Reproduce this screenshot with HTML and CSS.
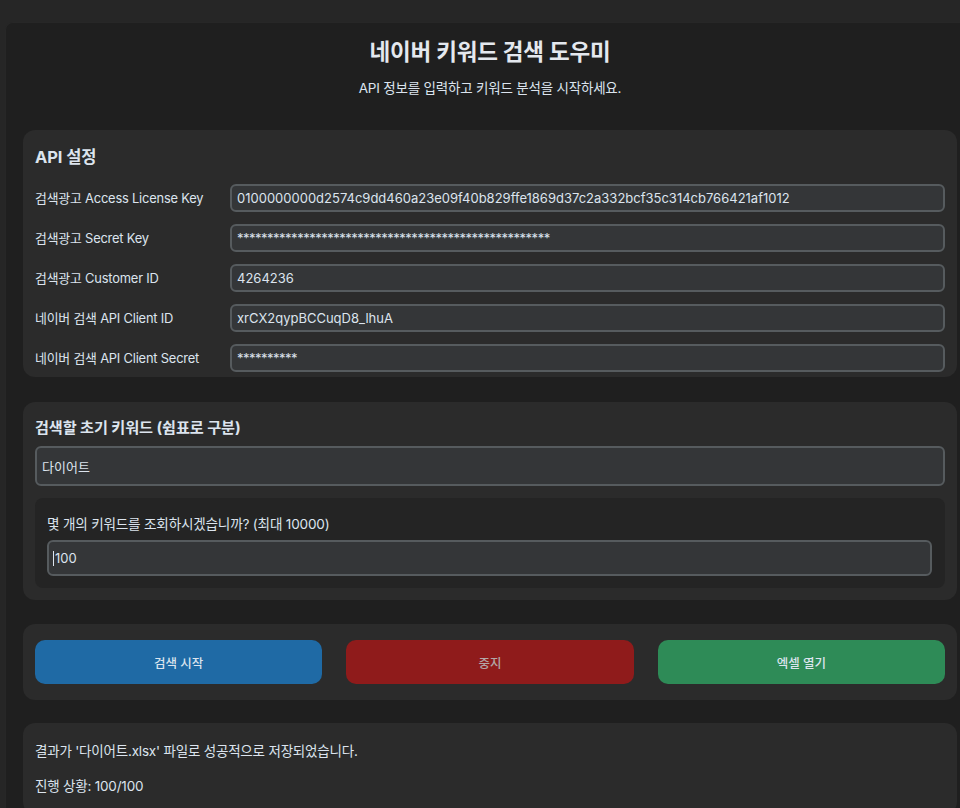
FILE: index.html
```html
<!DOCTYPE html>
<html lang="ko">
<head>
<meta charset="utf-8">
<title>네이버 키워드 검색 도우미</title>
<link rel="stylesheet" href="styles.css">
</head>
<body>
<div class="app">
  <header class="header">
    <h1 class="title">네이버 키워드 검색 도우미</h1>
    <p class="subtitle">API 정보를 입력하고 키워드 분석을 시작하세요.</p>
  </header>

  <section class="card api-card">
    <h2 class="card-title">API 설정</h2>
    <div class="api-grid">
      <span class="label">검색광고 Access License Key</span>
      <div class="field small">0100000000d2574c9dd460a23e09f40b829ffe1869d37c2a332bcf35c314cb766421af1012</div>
      <span class="label">검색광고 Secret Key</span>
      <div class="field small masked">****************************************************</div>
      <span class="label">검색광고 Customer ID</span>
      <div class="field small">4264236</div>
      <span class="label">네이버 검색 API Client ID</span>
      <div class="field small">xrCX2qypBCCuqD8_lhuA</div>
      <span class="label">네이버 검색 API Client Secret</span>
      <div class="field small masked">**********</div>
    </div>
  </section>

  <section class="card keyword-card">
    <h2 class="card-title">검색할 초기 키워드 (쉼표로 구분)</h2>
    <div class="field large">다이어트</div>
    <div class="count-box">
      <div class="count-label">몇 개의 키워드를 조회하시겠습니까? (최대 10000)</div>
      <div class="field medium"><span class="caret"></span>100</div>
    </div>
  </section>

  <section class="card button-card">
    <button class="btn btn-blue" type="button">검색 시작</button>
    <button class="btn btn-red" type="button" disabled>중지</button>
    <button class="btn btn-green" type="button">엑셀 열기</button>
  </section>

  <section class="card status-card">
    <p class="status">결과가 '다이어트.xlsx' 파일로 성공적으로 저장되었습니다.</p>
    <p class="status">진행 상황: 100/100</p>
  </section>
</div>
</body>
</html>
```
FILE: styles.css
```css
* {
  box-sizing: border-box;
}

html, body {
  margin: 0;
  padding: 0;
  overflow: hidden;
}

body {
  background: #262626;
  font-family: Inter, "Noto Sans CJK KR", sans-serif;
  color: #dce4ee;
  font-size: 13px;
}

.app {
  margin: 22px 0 0 5px;
  width: 969px;
  min-height: 820px;
  padding: 0 17px;
  background: #1f1f1f;
  border-top: 1px solid #272727;
  border-left: 1px solid #272727;
  border-top-left-radius: 8px;
}

.header {
  padding-top: 13px;
  text-align: center;
}

.title {
  margin: 0;
  font-size: 22.5px;
  line-height: 32px;
  font-weight: 700;
  letter-spacing: -0.2px;
  color: #e4e8ee;
}

.subtitle {
  margin: 11px 0 0;
  font-size: 13.5px;
  line-height: 18px;
  letter-spacing: -0.2px;
}

.card {
  background: #2b2b2b;
  border-radius: 12px;
}

.card-title {
  margin: 0;
  font-size: 15.2px;
  line-height: 26px;
  font-weight: 700;
  letter-spacing: -0.1px;
}

.api-card {
  margin-top: 33px;
  padding: 14px 12px 5px;
}

.api-card .card-title {
  font-size: 16.5px;
  margin-bottom: 14px;
}

.api-grid {
  display: grid;
  grid-template-columns: 183px 1fr;
  grid-auto-rows: 28px;
  column-gap: 12px;
  row-gap: 12px;
  align-items: center;
}

.label {
  font-size: 12.9px;
  line-height: 18px;
  letter-spacing: -0.2px;
  padding-top: 2px;
}

.field {
  display: flex;
  align-items: center;
  background: #343638;
  border: 2px solid #565b5e;
  border-radius: 6px;
  color: #dce4ee;
  font-size: 13px;
  white-space: nowrap;
  overflow: hidden;
}

.field.masked {
  letter-spacing: -0.5px;
}

.field.small {
  height: 28px;
  padding: 0 5px;
}

.field.large {
  height: 40px;
  padding: 0 5px;
}

.field.medium {
  height: 36px;
  padding: 0 4px;
}

.caret {
  display: inline-block;
  width: 1px;
  height: 15px;
  background: #dce4ee;
  margin-right: 1px;
}

.keyword-card {
  margin-top: 25px;
  padding: 13px 12px 12px;
}

.keyword-card .card-title {
  margin-bottom: 5px;
}

.count-box {
  margin-top: 12px;
  background: #242424;
  border-radius: 8px;
  padding: 17px 13px 12px 12px;
}

.count-label {
  font-size: 13.6px;
  line-height: 18px;
  letter-spacing: -0.2px;
  margin-bottom: 7px;
}

.button-card {
  margin-top: 24px;
  padding: 16px 12px;
  display: grid;
  grid-template-columns: repeat(3, 1fr);
  column-gap: 24px;
}

.btn {
  height: 44px;
  border: none;
  border-radius: 10px;
  font-family: inherit;
  font-size: 12.5px;
  font-weight: 500;
  color: #dce4ee;
  cursor: pointer;
}

.btn-blue {
  background: #1f6aa5;
}

.btn-red {
  background: #8f1b1b;
  color: #b2a6a6;
  cursor: default;
}

.btn-green {
  background: #2e8b57;
}

.status-card {
  margin-top: 23px;
  padding: 19px 12px;
}

.status {
  margin: 0;
  font-size: 13.5px;
  line-height: 18px;
  letter-spacing: -0.2px;
}

.status + .status {
  margin-top: 17px;
}
```
